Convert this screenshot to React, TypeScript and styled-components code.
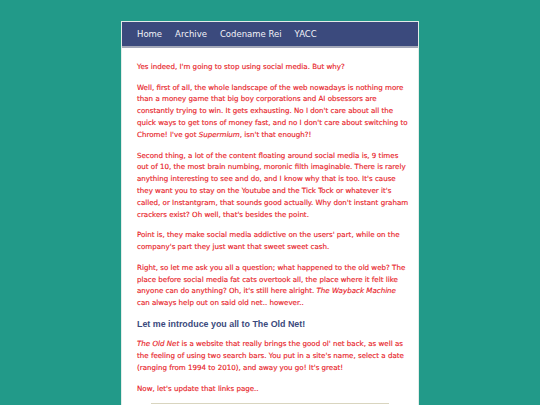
import React, { ReactElement } from "react";
import styled, { createGlobalStyle } from "styled-components";

const GlobalStyle = createGlobalStyle`
  html, body {
    margin: 0;
    padding: 0;
    background: #229a89;
    height: 100%;
    overflow: hidden;
  }
`;

const navLinks = ["Home", "Archive", "Codename Rei", "YACC"];

export default function App(): ReactElement {
  return (
    <>
      <GlobalStyle />
      <Page>
        <Wrapper>
          <Nav>
            {navLinks.map((link) => (
              <NavLink key={link} href="#">
                {link}
              </NavLink>
            ))}
          </Nav>

          <Content>
            <Para>Yes indeed, I'm going to stop using social media. But why?</Para>

            <Para>
              Well, first of all, the whole landscape of the web nowadays is
              nothing more than a money game that big boy corporations and AI
              obsessors are constantly trying to win. It gets exhausting. No I
              don't care about all the quick ways to get tons of money fast, and
              no I don't care about switching to Chrome! I've got{" "}
              <em>Supermium</em>, isn't that enough?!
            </Para>

            <Para>
              Second thing, a lot of the content floating around social media
              is, 9 times out of 10, the most brain numbing, moronic filth
              imaginable. There is rarely anything interesting to see and do,
              and I know why that is too. It's cause they want you to stay on
              the Youtube and the Tick Tock or whatever it's called, or
              Instantgram, that sounds good actually. Why don't instant graham
              crackers exist? Oh well, that's besides the point.
            </Para>

            <Para>
              Point is, they make social media addictive on the users' part,
              while on the company's part they just want that sweet sweet cash.
            </Para>

            <Para>
              Right, so let me ask you all a question; what happened to the old
              web? The place before social media fat cats overtook all, the
              place where it felt like anyone can do anything? Oh, it's still
              here alright. <em>The Wayback Machine</em> can always help out on
              said old net.. however..
            </Para>

            <Heading>Let me introduce you all to The Old Net!</Heading>

            <Para>
              <em>The Old Net</em> is a website that really brings the good ol'
              net back, as well as the feeling of using two search bars. You put
              in a site's name, select a date (ranging from 1994 to 2010), and
              away you go! It's great!
            </Para>

            <Para>Now, let's update that links page..</Para>

            <LinksBox />
          </Content>
        </Wrapper>
      </Page>
    </>
  );
}

const Page = styled.div`
  display: flex;
  justify-content: center;
  padding-top: 21px;
`;

const Wrapper = styled.div`
  width: 296px;
  background: #ffffff;
  border: 1px solid #e4ece8;
  border-bottom: none;
  min-height: 400px;
`;

const Nav = styled.nav`
  display: flex;
  gap: 13px;
  align-items: center;
  height: 24px;
  padding: 0 15px;
  background: #3b4a7d;
  border-bottom: 2px solid #a3a8b8;
`;

const NavLink = styled.a`
  color: #f2f2f8;
  text-decoration: none;
  font-family: "Comic Sans MS", "DejaVu Sans", sans-serif;
  font-size: 8.5px;
`;

const Content = styled.main`
  padding: 13px 8px 0 15px;
`;

const Para = styled.p`
  margin: 0 0 8.9px;
  color: #e81c28;
  font-family: "Comic Sans MS", "DejaVu Sans", sans-serif;
  font-size: 7.1px;
  line-height: 11.8px;
  -webkit-text-stroke: 0.15px #e81c28;

  em {
    font-style: italic;
  }
`;

const Heading = styled.h2`
  margin: 0 0 8.5px;
  color: #3b4a7d;
  font-family: "Liberation Sans", Arial, sans-serif;
  font-weight: bold;
  font-size: 8.9px;
  line-height: 12px;
`;

const LinksBox = styled.div`
  margin: 4px 21px 0 14px;
  height: 40px;
  border-top: 1px solid #d9d5bf;
`;
